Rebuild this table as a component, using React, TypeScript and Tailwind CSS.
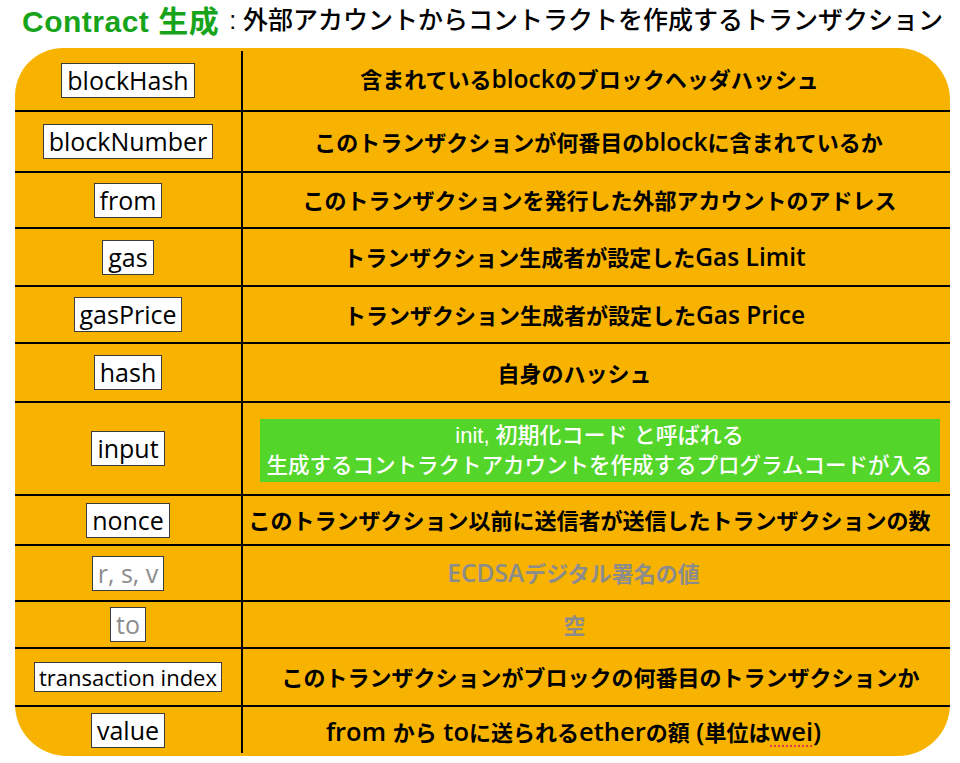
import React from "react";

type Row = {
  label: string;
  labelCls?: string;
  h: string;
  text: React.ReactNode;
  textCls: string;
  gray?: boolean;
  green?: boolean;
};

function Mixed({ s, big }: { s: string; big?: boolean }) {
  const parts = s.split(/([\x20-\x7E]+)/).filter((p) => p.length > 0);
  return (
    <>
      {parts.map((p, i) =>
        /^[\x20-\x7E]+$/.test(p) ? (
          <span key={i} className={big ? "text-[25.5px] font-semibold" : "text-[24.5px] font-semibold"}>
            {p}
          </span>
        ) : (
          <span key={i}>{p}</span>
        )
      )}
    </>
  );
}

const rows: Row[] = [
  { label: "blockHash", h: "h-[64px]", text: <Mixed s="含まれているblockのブロックヘッダハッシュ" />, textCls: "pr-[14px]" },
  { label: "blockNumber", h: "h-[61px]", text: <Mixed s="このトランザクションが何番目のblockに含まれているか" />, textCls: "pl-[4px]" },
  { label: "from", h: "h-[56px]", text: "このトランザクションを発行した外部アカウントのアドレス", textCls: "pl-[6px]" },
  { label: "gas", h: "h-[58px]", text: <Mixed s="トランザクション生成者が設定したGas Limit" />, textCls: "pr-[44px]" },
  { label: "gasPrice", h: "h-[57px]", text: <Mixed s="トランザクション生成者が設定したGas Price" />, textCls: "pr-[44px]" },
  { label: "hash", h: "h-[59px]", text: "自身のハッシュ", textCls: "pr-[44px]" },
  { label: "input", h: "h-[93px]", text: null, textCls: "", green: true },
  { label: "nonce", h: "h-[50px]", text: "このトランザクション以前に送信者が送信したトランザクションの数", textCls: "pr-[14px]" },
  { label: "r, s, v", h: "h-[56px]", text: <Mixed s="ECDSAデジタル署名の値" />, textCls: "pr-[46px]", gray: true },
  { label: "to", h: "h-[47px]", text: "空", textCls: "pr-[44px]", gray: true },
  {
    label: "transaction index",
    labelCls: "text-[22px] h-[30px] leading-[28px] px-[4px]",
    h: "h-[58px]",
    text: "このトランザクションがブロックの何番目のトランザクションか",
    textCls: "pl-[8px]",
  },
  {
    label: "value",
    h: "h-[49px]",
    text: (
      <>
        <Mixed big s="from から toに送られるetherの額 (単位は" />
        <span className="text-[25.5px] font-semibold underline decoration-dotted decoration-[#e23b3b] decoration-2 underline-offset-4">
          wei
        </span>
        <span className="text-[25.5px] font-semibold">)</span>
      </>
    ),
    textCls: "pr-[46px]",
  },
];

export default function App() {
  const font = { fontFamily: '"Liberation Sans", "Noto Sans CJK JP", sans-serif' };
  const open = { fontFamily: '"Open Sans", "Noto Sans CJK JP", sans-serif' };
  return (
    <div className="w-[960px] h-[763px] bg-white overflow-hidden" style={font}>
      <div className="h-[48px] flex items-center pl-[22px] pb-[6px] whitespace-nowrap">
        <span className="text-[30px] font-bold text-[#17a41a] tracking-[0.5px]">Contract 生成</span>
        <span className="text-[25px] font-medium text-black ml-[10px]">: 外部アカウントからコントラクトを作成するトランザクション</span>
      </div>
      <div className="ml-[15px] w-[935px] h-[708px] bg-[#f7b300] rounded-tl-[48px] rounded-tr-[52px] rounded-bl-[52px] rounded-br-[52px] overflow-hidden flex flex-col">
        {rows.map((r, i) => (
          <div
            key={r.label}
            className={`${r.h} flex shrink-0 ${i < rows.length - 1 ? "border-b-2 border-black" : ""}`}
          >
            <div className={`w-[228px] shrink-0 border-r-2 border-black flex items-center justify-center ${i === 0 ? "mt-[3px]" : ""} ${i === rows.length - 1 ? "mb-[3px]" : ""}`}>
              <span
                style={open}
                className={`bg-white border border-[#3c3c3c] whitespace-nowrap font-medium ${
                  r.labelCls ?? "text-[25px] h-[35px] leading-[32px] px-[5px]"
                } ${r.gray ? "text-[#8c8c8c]" : "text-black"}`}
              >
                {r.label}
              </span>
            </div>
            <div className="flex-1 flex items-center justify-center">
              {r.green ? (
                <div className="w-[680px] h-[63px] bg-[#53d52a] text-white font-medium leading-[31px] text-center ml-[6px] mt-[4px] pt-[1px]">
                  <div className="text-[22px]">init, 初期化コード と呼ばれる</div>
                  <div className="text-[21.5px]">生成するコントラクトアカウントを作成するプログラムコードが入る</div>
                </div>
              ) : (
                <div
                  style={open}
                  className={`w-full text-center whitespace-nowrap text-[22px] leading-[30px] font-bold ${r.textCls} ${
                    r.gray ? "text-[#8c8c8c]" : "text-black"
                  }`}
                >
                  {r.text}
                </div>
              )}
            </div>
          </div>
        ))}
      </div>
    </div>
  );
}
